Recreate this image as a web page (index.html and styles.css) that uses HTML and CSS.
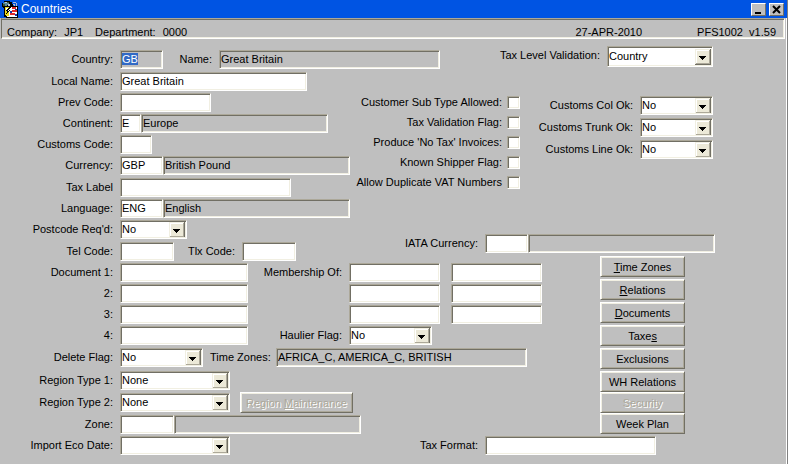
FILE: index.html
```html
<!DOCTYPE html>
<html lang="en">

<head>
    <meta charset="UTF-8">
    <meta name="viewport" content="width=device-width, initial-scale=1.0">
    <title>Countries</title>

    <link rel="stylesheet" href="styles.css">
</head>

<body>
    <header class="titlebar">
        <svg class="logo" viewBox="0 0 17 17" shape-rendering="crispEdges" aria-hidden="true">
            <path fill="#000" d="M3 0h6v1h2v2h1v4H2V6H1V2h2z" />
            <path fill="#5a8a9c" d="M3 1h3v1h2v2H6v1H2V2h1z" />
            <path fill="#b8c8d8" d="M4 1h2v1H4zM7 3h2v2H7z" />
            <path fill="#3a5a30" d="M2 3h2v2H2zM6 1h2v1H6z" />
            <path fill="#b0b8d0" d="M12 1h3v1h1v3h-1V2h-3zM12 3h2v2h-1V4h-1z" />
            <path fill="#000" d="M3 5h14v12H5v-1H3z" />
            <path fill="#e8d820" d="M4 6h4v9H5v-1H4z" />
            <path fill="#fff" d="M8 6h8v10H6v-1h2z" />
            <path fill="#e02828" d="M11 6h4v2h-4zM11 9h5v2h-5zM9 12h5v2H9z" />
            <path fill="#1838a0" d="M9 10h2v2H9zM14 8h2v1h-2zM14 13h2v2h-2z" />
            <path fill="#000" d="M8 6h2v1H9v1H8v1h1v1H8v1H7v1H6v1H5v-1h1v-2H5V9h1V8h1V7h1z" />
            <path fill="#fff" d="M5 7h2v1H6v1H5zM7 9h1v1H7z" />
        </svg>
        <h1>Countries</h1>
        <button class="win-btn" type="button" aria-label="Minimize">
            <svg viewBox="0 0 11 9" shape-rendering="crispEdges"><path d="M2 7h6v2H2z" /></svg>
        </button>
        <button class="win-btn" type="button" aria-label="Close">
            <svg viewBox="0 0 11 9"><path d="M2 1l7 7M9 1l-7 7" stroke="#000" stroke-width="2" /></svg>
        </button>
    </header>

    <div class="status">
        <span>Company:</span>
        <span>JP1</span>
        <span class="dept">Department:</span>
        <span>0000</span>
        <span class="date">27-APR-2010</span>
        <span>PFS1002&nbsp; v1.59</span>
    </div>

    <main>
        <div class="row country">
            <label class="main-label" for="country">Country:</label>
            <input class="code shaded" id="country" value="GB">
            <label class="name-label" for="name">Name:</label>
            <input class="name shaded" id="name" value="Great Britain" readonly>
            <label class="level-label" for="level">Tax Level Validation:</label>
            <select class="level" id="level"><option>Country</option></select>
        </div>

        <section class="details">
            <div class="group">
                <div class="row">
                    <label class="main-label" for="local">Local Name:</label>
                    <input class="desc" id="local" value="Great Britain">
                </div>
                <div class="row">
                    <label class="main-label" for="prev">Prev Code:</label>
                    <input class="medium" id="prev">
                </div>
                <div class="row">
                    <label class="main-label" for="continent">Continent:</label>
                    <div class="pair">
                        <input class="letter" id="continent" value="E">
                        <input class="desc shaded" value="Europe" aria-label="Continent name" readonly>
                    </div>
                </div>
                <div class="row">
                    <label class="main-label" for="customs">Customs Code:</label>
                    <input class="tiny" id="customs">
                </div>
                <div class="row">
                    <label class="main-label" for="currency">Currency:</label>
                    <div class="pair">
                        <input class="code" id="currency" value="GBP">
                        <input class="desc shaded" value="British Pound" aria-label="Currency name" readonly>
                    </div>
                </div>
            </div>
            <div class="group">
                <div class="row">
                    <label class="main-label" for="taxlabel">Tax Label</label>
                    <input class="long" id="taxlabel">
                </div>
                <div class="row">
                    <label class="main-label" for="language">Language:</label>
                    <div class="pair">
                        <input class="code" id="language" value="ENG">
                        <input class="desc shaded" value="English" aria-label="Language name" readonly>
                    </div>
                </div>
                <div class="row">
                    <label class="main-label" for="postcode">Postcode Req'd:</label>
                    <select class="postcode" id="postcode"><option>No</option></select>
                </div>
            </div>
            <div class="row">
                <label class="main-label" for="tel">Tel Code:</label>
                <input class="short" id="tel">
                <label class="tlx-label" for="tlx">Tlx Code:</label>
                <input class="short" id="tlx">
            </div>
        </section>

        <section class="checks">
            <div class="check-cols">
                <div class="flags">
                    <label for="subtype">Customer Sub Type Allowed:</label><input type="checkbox" id="subtype">
                    <label for="taxflag">Tax Validation Flag:</label><input type="checkbox" id="taxflag">
                    <label for="notax">Produce 'No Tax' Invoices:</label><input type="checkbox" id="notax">
                    <label for="shipper">Known Shipper Flag:</label><input type="checkbox" id="shipper">
                    <label for="vat">Allow Duplicate VAT Numbers</label><input type="checkbox" id="vat">
                </div>
                <div class="customs">
                    <label for="col">Customs Col Ok:</label>
                    <select id="col"><option>No</option></select>
                    <label for="trunk">Customs Trunk Ok:</label>
                    <select id="trunk"><option>No</option></select>
                    <label for="line">Customs Line Ok:</label>
                    <select id="line"><option>No</option></select>
                </div>
            </div>
            <div class="row iata">
                <label class="right-label" for="iata">IATA Currency:</label>
                <div class="pair">
                    <input class="code" id="iata">
                    <input class="desc shaded" aria-label="IATA currency name" readonly>
                </div>
            </div>
        </section>

        <section class="documents">
            <div class="doc-cols">
                <div class="doc-list">
                    <label for="doc1">Document 1:</label><input id="doc1">
                    <label for="doc2">2:</label><input id="doc2">
                    <label for="doc3">3:</label><input id="doc3">
                    <label for="doc4">4:</label><input id="doc4">
                </div>
                <div class="members">
                    <label for="member1">Membership Of:</label>
                    <div class="member-row">
                        <input class="medium" id="member1">
                        <input class="medium" aria-label="Membership 2">
                    </div>
                    <div class="member-row">
                        <input class="medium" aria-label="Membership 3">
                        <input class="medium" aria-label="Membership 4">
                    </div>
                    <div class="member-row">
                        <input class="medium" aria-label="Membership 5">
                        <input class="medium" aria-label="Membership 6">
                    </div>
                    <label for="haulier">Haulier Flag:</label>
                    <select class="flag" id="haulier"><option>No</option></select>
                </div>
            </div>
            <div class="row">
                <label class="main-label" for="delete">Delete Flag:</label>
                <select class="flag" id="delete"><option>No</option></select>
                <label class="zones-label" for="zones">Time Zones:</label>
                <input class="zones shaded" id="zones" value="AFRICA_C, AMERICA_C, BRITISH" readonly>
            </div>
        </section>

        <section class="regions">
            <div class="row">
                <label class="main-label" for="region1">Region Type 1:</label>
                <select class="region" id="region1"><option>None</option></select>
            </div>
            <div class="row">
                <label class="main-label" for="region2">Region Type 2:</label>
                <select class="region" id="region2"><option>None</option></select>
                <button class="btn maintain" type="button" disabled>Region <u>M</u>aintenance</button>
            </div>
            <div class="row">
                <label class="main-label" for="zone">Zone:</label>
                <div class="pair">
                    <input class="short" id="zone">
                    <input class="desc shaded" aria-label="Zone name" readonly>
                </div>
            </div>
        </section>

        <nav class="actions">
            <div class="btn-stack">
                <button class="btn" type="button"><u>T</u>ime Zones</button>
                <button class="btn" type="button"><u>R</u>elations</button>
                <button class="btn" type="button"><u>D</u>ocuments</button>
                <button class="btn" type="button">Taxe<u>s</u></button>
                <button class="btn" type="button">Exclusions</button>
                <button class="btn" type="button">WH Relations</button>
            </div>
            <button class="btn" type="button" disabled>Security</button>
            <button class="btn" type="button">Week Plan</button>
        </nav>

        <div class="row import">
            <label class="main-label" for="import">Import Eco Date:</label>
            <select class="region" id="import"><option></option></select>
        </div>
        <div class="row format">
            <label class="right-label" for="format">Tax Format:</label>
            <input class="long" id="format">
        </div>
    </main>

    <script>
        const country = document.querySelector('#country');
        country.focus();
        country.select();
    </script>
</body>

</html>
```
FILE: styles.css
```css
* {
    padding: 0;
    margin: 0;
    box-sizing: border-box;
    font-family: "Liberation Sans", Arial, sans-serif;
}

body {
    min-height: 100vh;
    background-color: #bfbfbf;
    border-right: 1px solid #808080;
    box-shadow: inset -1px 0 #fff;
    font-size: 11px;
    line-height: 13px;
    color: #000;
}

label,
span {
    white-space: nowrap;
}

label {
    text-align: right;
}

/* title bar */
.titlebar {
    display: flex;
    align-items: center;
    gap: 3px;
    height: 18px;
    padding: 0 3px 0 1px;
    background-color: #0054e3;
    color: #fff;
}

.titlebar h1 {
    flex: 1;
    font-size: 12px;
    font-weight: normal;
}

.logo {
    width: 17px;
    height: 17px;
}

.win-btn {
    width: 15px;
    height: 13px;
    border: 1px solid;
    border-color: #fff #716f64 #716f64 #fff;
    background-color: #bfbfbf;
}

.win-btn svg {
    display: block;
    width: 11px;
    height: 9px;
    margin: 0 auto;
}

/* company line */
.status {
    display: flex;
    align-items: flex-end;
    gap: 7px;
    height: 21px;
    margin: 0 2px 0 1px;
    padding: 0 8px 0 5px;
    border: 1px solid;
    border-color: #aca899 #fff #fff #716f64;
    box-shadow: inset 0 1px #716f64, inset -1px -1px #f1efe2;
    line-height: 12px;
}

.dept {
    margin-left: 5px;
}

.date {
    margin-left: auto;
    margin-right: 48px;
}

main {
    display: grid;
    grid-template-columns: 350px 250px 1fr;
    row-gap: 2px;
    padding-top: 7px;
}

.row {
    display: flex;
    align-items: center;
    gap: 7px;
}

.pair {
    display: flex;
}

.main-label {
    width: 113px;
}

/* fields */
input,
select {
    height: 19px;
    border: 1px solid;
    border-color: #aca899 #fff #fff #aca899;
    border-radius: 0;
    box-shadow: inset 1px 1px #716f64, inset -1px -1px #f1efe2;
    background-color: #fff;
    padding: 0 1px 1px;
    font-size: 11px;
    color: #000;
    outline: none;
}

select {
    appearance: none;
    background-image: url("data:image/svg+xml,%3Csvg xmlns='http://www.w3.org/2000/svg' width='16' height='16' shape-rendering='crispEdges'%3E%3Cpath fill='%23716f64' d='M0 0h16v16H0z'/%3E%3Cpath fill='%23f1efe2' d='M0 0h15v15H0z'/%3E%3Cpath fill='%23aca899' d='M1 1h14v14H1z'/%3E%3Cpath fill='%23fff' d='M1 1h13v13H1z'/%3E%3Cpath fill='%23ece9d8' d='M2 2h12v12H2z'/%3E%3Cpath d='M4 7h7v1H4zM5 8h5v1H5zM6 9h3v1H6zM7 10h1v1H7z'/%3E%3C/svg%3E");
    background-repeat: no-repeat;
    background-position: right 1px center;
}

.shaded {
    background-color: #bfbfbf;
}

input::selection {
    background-color: #316ac5;
    color: #fff;
}

input[type="checkbox"] {
    appearance: none;
    width: 13px;
    height: 13px;
    padding: 0;
}

.letter {
    width: 21px;
}

.tiny {
    width: 32px;
}

.code {
    width: 43px;
}

.short {
    width: 54px;
}

.postcode {
    width: 67px;
}

.flag {
    width: 83px;
}

.medium {
    width: 91px;
}

.region {
    width: 110px;
}

.long {
    width: 171px;
}

.desc {
    width: 187px;
}

.name {
    width: 221px;
}

.zones {
    width: 251px;
}

/* first line */
.country {
    grid-column: 1 / 4;
    grid-row: 1;
    height: 24px;
    padding-top: 3px;
}

.name-label {
    width: 42px;
}

.level-label {
    width: 153px;
    align-self: flex-start;
}

.level {
    width: 106px;
    height: 21px;
    align-self: flex-start;
    margin-top: -3px;
}

.details {
    grid-column: 1;
    grid-row: 2 / 4;
    display: flex;
    flex-direction: column;
    gap: 3px;
}

.group {
    display: flex;
    flex-direction: column;
    gap: 2px;
}

.tlx-label {
    width: 54px;
}

/* flags and customs */
.checks {
    grid-column: 2 / 4;
    grid-row: 2;
    padding-top: 24px;
}

.check-cols {
    display: flex;
    align-items: flex-start;
    gap: 6px;
}

.flags {
    display: grid;
    grid-template-columns: 152px 13px;
    gap: 7px 5px;
}

.customs {
    display: grid;
    grid-template-columns: 107px 73px;
    align-items: center;
    gap: 3px 7px;
}

.iata {
    margin-top: 45px;
}

.right-label {
    width: 128px;
}

/* documents */
.documents {
    grid-column: 1 / 3;
    grid-row: 4;
    display: flex;
    flex-direction: column;
    gap: 3px;
}

.doc-cols {
    display: flex;
    gap: 7px;
}

.doc-list,
.members {
    display: grid;
    align-items: center;
    gap: 2px 7px;
}

.doc-list {
    grid-template-columns: 113px 128px;
}

.members {
    grid-template-columns: 87px auto;
}

.member-row {
    grid-column: 2;
    display: flex;
    gap: 11px;
}

.zones-label {
    width: 59px;
}

.regions {
    grid-column: 1 / 3;
    grid-row: 5;
    display: flex;
    flex-direction: column;
    gap: 2px;
    padding-top: 2px;
}

/* buttons */
.btn {
    height: 21px;
    border: 1px solid;
    border-color: #fff #716f64 #716f64 #fff;
    box-shadow: inset 1px 1px #f1efe2, inset -1px -1px #aca899;
    background-color: #bfbfbf;
    font-size: 11px;
    color: #000;
}

.btn:disabled {
    color: #aca899;
    text-shadow: 1px 1px #fff;
}

.maintain {
    width: 113px;
    margin-left: 3px;
}

.actions {
    grid-column: 3;
    grid-row: 3 / 6;
    display: flex;
    flex-direction: column;
    width: 85px;
    padding-top: 1px;
}

.btn-stack {
    display: flex;
    flex-direction: column;
    gap: 2px;
}

.import {
    grid-column: 1;
    grid-row: 6;
}

.format {
    grid-column: 2 / 4;
    grid-row: 6;
}
```
